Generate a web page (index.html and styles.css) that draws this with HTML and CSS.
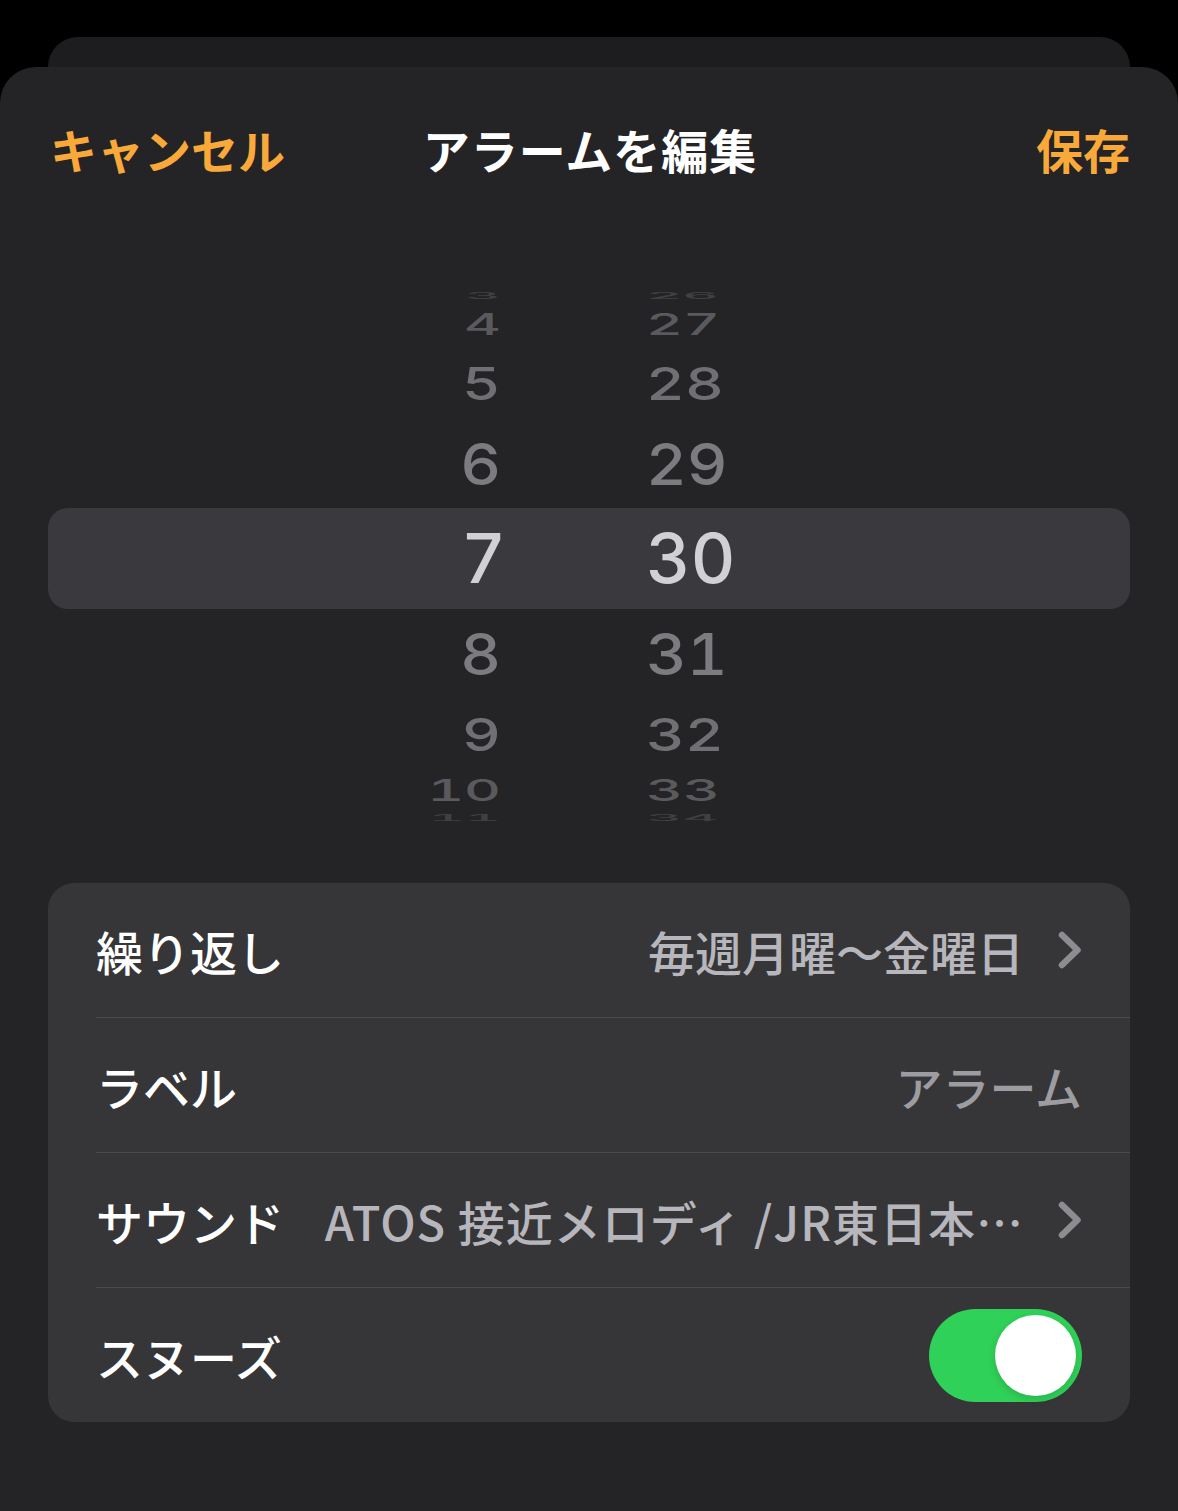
FILE: index.html
```html
<!DOCTYPE html>
<html lang="ja">
<head>
  <meta charset="UTF-8">
  <title>アラームを編集</title>
  <link rel="stylesheet" href="styles.css">
</head>
<body>
  <div class="back-card"></div>
  <div class="sheet">
    <div class="nav">
      <span class="nav-btn">キャンセル</span>
      <span class="nav-title">アラームを編集</span>
      <span class="nav-btn nav-save">保存</span>
    </div>

    <div class="wheel">
      <div class="wheel-row r-u4"><span class="hour">3</span><span class="min">26</span></div>
      <div class="wheel-row r-u3"><span class="hour">4</span><span class="min">27</span></div>
      <div class="wheel-row r-u2"><span class="hour">5</span><span class="min">28</span></div>
      <div class="wheel-row r-u1"><span class="hour">6</span><span class="min">29</span></div>
      <div class="wheel-row r-sel"><span class="hour">7</span><span class="min">30</span></div>
      <div class="wheel-row r-d1"><span class="hour">8</span><span class="min">31</span></div>
      <div class="wheel-row r-d2"><span class="hour">9</span><span class="min">32</span></div>
      <div class="wheel-row r-d3"><span class="hour">10</span><span class="min">33</span></div>
      <div class="wheel-row r-d4"><span class="hour">11</span><span class="min">34</span></div>
    </div>

    <div class="list">
      <div class="row">
        <span class="label">繰り返し</span>
        <span class="value">毎週月曜〜金曜日</span>
        <svg class="chevron" width="24" height="38" viewBox="0 0 24 38"><path d="M4 4 L19.5 19 L4 34" fill="none" stroke="#8c8c91" stroke-width="6.5" stroke-linecap="round" stroke-linejoin="round"/></svg>
      </div>
      <div class="row">
        <span class="label">ラベル</span>
        <span class="value value-dim">アラーム</span>
      </div>
      <div class="row">
        <span class="label">サウンド</span>
        <span class="value value-wide">ATOS 接近メロディ /JR東日本…</span>
        <svg class="chevron" width="24" height="38" viewBox="0 0 24 38"><path d="M4 4 L19.5 19 L4 34" fill="none" stroke="#8c8c91" stroke-width="6.5" stroke-linecap="round" stroke-linejoin="round"/></svg>
      </div>
      <div class="row">
        <span class="label">スヌーズ</span>
        <div class="toggle"><div class="knob"></div></div>
      </div>
    </div>
  </div>
</body>
</html>
```

FILE: styles.css
```css
body {
  margin: 0;
  background: #000;
  font-family: "Noto Sans CJK JP", "Noto Sans", sans-serif;
}
.back-card {
  height: 30px;
  margin: 37px 48px 0;
  background: #1d1d1f;
  border-radius: 30px 30px 0 0;
}
.sheet {
  min-height: 1444px;
  background: #242426;
  border-radius: 36px 36px 0 0;
  overflow: hidden;
}

/* nav bar */
.nav {
  display: grid;
  grid-template-columns: 1fr auto 1fr;
  align-items: center;
  padding: 54px 48px 0 50px;
  height: 56px;
  font-size: 47px;
  line-height: 56px;
  font-weight: 700;
}
.nav-btn {
  color: #f9a83a;
}
.nav-save {
  justify-self: end;
}
.nav-title {
  color: #fff;
  letter-spacing: 1px;
}

/* time wheel */
.wheel {
  margin: 111px 48px 0;
  font-family: Inter, "Liberation Sans", sans-serif;
  font-weight: 500;
  font-variant-numeric: tabular-nums;
}
.wheel-row {
  display: grid;
  grid-template-columns: 458px 1fr;
  column-gap: 140px;
  align-items: center;
}
.wheel-row span {
  display: block;
  line-height: inherit;
}
.hour {
  text-align: right;
}
.wheel-row:not(.r-sel) .hour {
  margin-right: 5px;
}
.r-u4 { height: 16px; line-height: 16px; }
.r-u3 { height: 42px; line-height: 42px; }
.r-u2 { height: 74px; line-height: 74px; }
.r-u1 { height: 88px; line-height: 88px; }
.r-sel {
  height: 101px;
  line-height: 101px;
  background: #3a3a3e;
  border-radius: 20px;
}
.r-d1 { height: 90px; line-height: 90px; }
.r-d2 { height: 70px; line-height: 70px; }
.r-d3 { height: 44px; line-height: 44px; }
.r-d4 { height: 10px; line-height: 10px; }

.r-sel span { font-size: 69px; color: #d0d0d5; }
.r-u1 span, .r-d1 span { font-size: 63px; transform: scaleY(.92); color: #7c7c80; }
.r-u2 span, .r-d2 span { font-size: 60px; transform: scaleY(.76); color: #707074; }
.r-u3 span, .r-d3 span { font-size: 57px; transform: scaleY(.52); color: #5a5a5e; }
.r-u4 span, .r-d4 span { font-size: 56px; transform: scaleY(.15); color: #404044; }

/* settings list */
.list {
  margin: 60px 48px 0;
  padding-left: 48px;
  background: #363638;
  border-radius: 26px;
}
.row {
  display: flex;
  align-items: center;
  height: 134px;
  padding-right: 48px;
  border-bottom: 1px solid #4a4a4e;
  font-size: 47px;
  font-weight: 500;
}
.row:last-child {
  border-bottom: none;
}
.label {
  flex: none;
  color: #fff;
}
.value {
  margin-left: auto;
  min-width: 0;
  color: #b6b6bc;
  white-space: nowrap;
  overflow: hidden;
  text-overflow: ellipsis;
}
.value-dim {
  color: #9c9ca1;
}
.value-wide {
  flex: 1;
  margin-left: 38px;
  text-align: right;
  letter-spacing: 1px;
}
.chevron {
  flex: none;
  margin-left: 34px;
}
.toggle {
  margin-left: auto;
  box-sizing: border-box;
  width: 153px;
  height: 93px;
  padding: 6px;
  border-radius: 47px;
  background: #30d158;
  display: flex;
  justify-content: flex-end;
  align-items: center;
}
.knob {
  width: 81px;
  height: 81px;
  border-radius: 50%;
  background: #fff;
  box-shadow: 0 3px 8px rgba(0,0,0,0.15);
}
```
